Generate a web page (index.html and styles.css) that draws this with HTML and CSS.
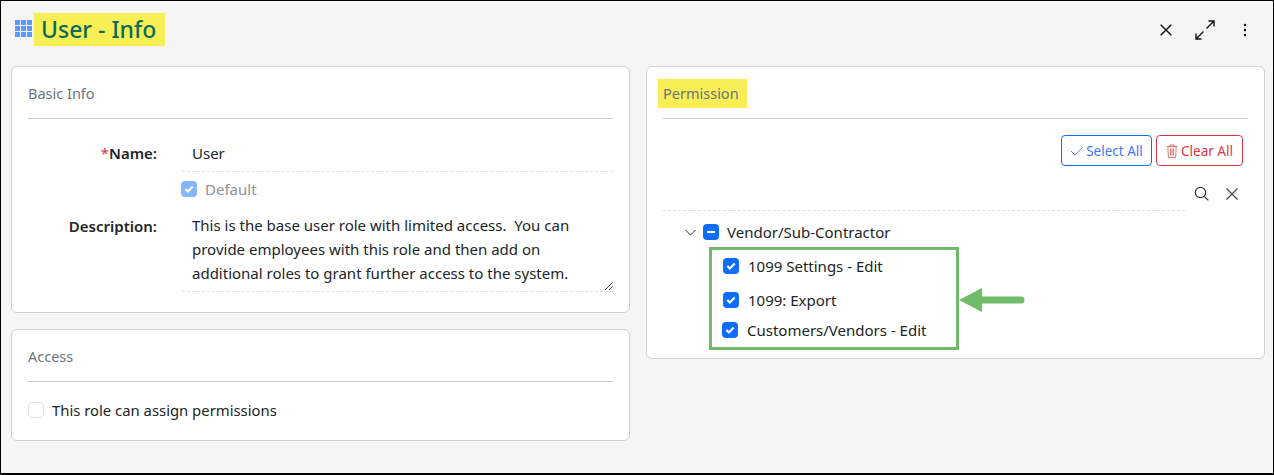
FILE: index.html
```html
<!DOCTYPE html>
<html lang="en">
<head>
<meta charset="utf-8">
<title>User - Info</title>
<link rel="stylesheet" href="styles.css">
</head>
<body>
<div class="frame">
  <header class="topbar">
    <div class="title-wrap">
      <svg class="grid-icon" width="18" height="18" viewBox="0 0 18 18"><g fill="#5b9bff"><rect x="0" y="0" width="5" height="5"/><rect x="6" y="0" width="5" height="5"/><rect x="12" y="0" width="5" height="5"/><rect x="0" y="6" width="5" height="5"/><rect x="6" y="6" width="5" height="5"/><rect x="12" y="6" width="5" height="5"/><rect x="0" y="12" width="5" height="5"/><rect x="6" y="12" width="5" height="5"/><rect x="12" y="12" width="5" height="5"/></g></svg>
      <h1 class="title"><span class="hl">User - Info</span></h1>
    </div>
    <div class="actions">
      <svg width="12" height="12" viewBox="0 0 12 12"><path d="M.7.7l10.600 10.600M11.300.7L.7 11.300" stroke="#111" stroke-width="1.400" fill="none"/></svg>
      <svg class="act-expand" width="20" height="20" viewBox="0 0 20 20"><path d="M11.500 8.500L19 1M13.500 1H19V6.500M8.500 11.500L1 19M1 13.500V19H6.500" stroke="#111" stroke-width="1.400" fill="none"/></svg>
      <svg width="4" height="14" viewBox="0 0 4 14"><circle cx="2" cy="2" r="1.200"/><circle cx="2" cy="7" r="1.200"/><circle cx="2" cy="12" r="1.200"/></svg>
    </div>
  </header>
  <main class="columns">
    <div class="col">
      <section class="card card-basic">
        <h2 class="card-title">Basic Info</h2>
        <div class="row row-name">
          <label class="label"><span class="req">*</span>Name:</label>
          <div class="value input-line">User</div>
        </div>
        <div class="row row-default">
          <span class="label"></span>
          <div class="check-row muted"><span class="cb cb-disabled"><svg width="10" height="8" viewBox="0 0 10 8"><path d="M1.300 4l2.500 2.500L8.700 1.500" stroke="#fff" stroke-width="2" fill="none"/></svg></span>Default</div>
        </div>
        <div class="row row-desc">
          <label class="label">Description:</label>
          <div class="value textarea">This is the base user role with limited access.&nbsp; You can<br>provide employees with this role and then add on<br>additional roles to grant further access to the system.<svg class="grip" width="8" height="8" viewBox="0 0 8 8"><path d="M0 8L8 0M4 8L8 4" stroke="#555" stroke-width="1" fill="none"/></svg></div>
        </div>
      </section>
      <section class="card card-access">
        <h2 class="card-title">Access</h2>
        <div class="check-row"><span class="cb cb-empty"></span>This role can assign permissions</div>
      </section>
    </div>
    <div class="col">
      <section class="card card-perm">
        <h2 class="card-title"><span class="hl hl-small">Permission</span></h2>
        <div class="btn-row">
          <button class="btn btn-blue"><svg width="14" height="10" viewBox="0 0 14 10"><path d="M1 5l4 4 8-8" stroke="#6f8ff5" stroke-width="1" fill="none"/></svg>Select All</button>
          <button class="btn btn-red"><svg width="12" height="14" viewBox="0 0 12 14"><path d="M.5 2.500h11M4 2.500V1h4v1.500M1.800 2.500l.6 11h7.200l.6-11M4.500 4.500v7M6 4.500v7M7.500 4.500v7" stroke="#e8776f" stroke-width="1" fill="none"/></svg>Clear All</button>
        </div>
        <div class="search-row">
          <div class="search-input"></div>
          <svg width="15" height="15" viewBox="0 0 15 15"><circle cx="6.500" cy="6.500" r="5.200" stroke="#333" stroke-width="1.200" fill="none"/><path d="M10.300 10.300L14.300 14.300" stroke="#333" stroke-width="1.200"/></svg>
          <svg width="12" height="12" viewBox="0 0 12 12"><path d="M.5.500l11 11M11.500.500l-11 11" stroke="#345" stroke-width="1.100" fill="none"/></svg>
        </div>
        <div class="tree">
          <div class="tree-parent">
            <svg class="caret" width="11" height="7" viewBox="0 0 11 7"><path d="M.5 1l5 5 5-5" stroke="#333" stroke-width="1" fill="none"/></svg>
            <span class="cb cb-on"><svg width="8" height="2" viewBox="0 0 8 2"><rect width="8" height="2" fill="#fff"/></svg></span>
            <span>Vendor/Sub-Contractor</span>
          </div>
          <div class="callout-wrap">
            <div class="callout">
              <div class="leaf leaf-1"><span class="cb cb-on"><svg width="10" height="8" viewBox="0 0 10 8"><path d="M1.300 4l2.500 2.500L8.700 1.500" stroke="#fff" stroke-width="2" fill="none"/></svg></span>1099 Settings - Edit</div>
              <div class="leaf leaf-2"><span class="cb cb-on"><svg width="10" height="8" viewBox="0 0 10 8"><path d="M1.300 4l2.500 2.500L8.700 1.500" stroke="#fff" stroke-width="2" fill="none"/></svg></span>1099: Export</div>
              <div class="leaf leaf-3"><span class="cb cb-on"><svg width="10" height="8" viewBox="0 0 10 8"><path d="M1.300 4l2.500 2.500L8.700 1.500" stroke="#fff" stroke-width="2" fill="none"/></svg></span>Customers/Vendors - Edit</div>
            </div>
            <svg class="arrow" width="66" height="24" viewBox="0 0 66 24"><path d="M0 12L23 0V8.500H62a3.500 3.500 0 0 1 0 7H23V24z" fill="#6fbb68"/></svg>
          </div>
        </div>
      </section>
    </div>
  </main>
</div>
</body>
</html>
```
FILE: styles.css
```css
* { box-sizing: border-box; }
html, body { margin: 0; height: 100%; }
body { font-family: "Noto Sans", "Open Sans", sans-serif; font-size: 15px; color: #212529; }
.frame { width: 1274px; height: 475px; border: 1px solid #000; border-width: 1px 1px 2px 1px; background: #f5f5f5; overflow: hidden; }
.topbar { height: 65px; display: flex; justify-content: space-between; padding: 12px 26px 0 14px; }
.title-wrap { display: flex; align-items: flex-start; }
.grid-icon { margin-top: 7px; }
.title { margin: 0 0 0 1px; font-size: 23px; font-weight: 500; line-height: 33px; color: #0b6b57; }
.hl { background: #f8ee55; display: inline-block; }
.title .hl { padding: 0 9px 0 7px; }
.actions { display: flex; align-items: center; gap: 23px; height: 33px; }
.act-expand { margin-right: 5px; }
.columns { display: flex; gap: 16px; padding: 0 8px 0 10px; align-items: flex-start; }
.col { width: 619px; display: flex; flex-direction: column; gap: 16px; }
.card { background: #fff; border: 1px solid #d2d2d2; border-radius: 6px; padding: 16px; }
.card-title { margin: 0; font-size: 14.500px; font-weight: 400; color: #6c757d; line-height: 21px; height: 36px; border-bottom: 1px solid #c9c9c9; }
.card-basic { height: 247px; }
.card-access { height: 112px; }
.card-perm { height: 293px; }
.row { display: flex; }
.label { width: 129px; text-align: right; font-weight: 600; flex: none; color: #212529; }
.req { color: #dc3545; font-weight: 400; }
.value { margin-left: 25px; flex: 1; }
.row-name { margin-top: 24px; line-height: 20px; }
.input-line { height: 29px; border-bottom: 1px dashed #e0e0e0; padding-left: 10px; }
.row-default { margin-top: 7px; height: 20px; line-height: 20px; }
.check-row { display: flex; align-items: center; gap: 8px; }
.row-default .check-row { margin-left: 24px; }
.muted { color: #8e9297; }
.cb { width: 16px; height: 16px; border-radius: 4px; display: inline-flex; align-items: center; justify-content: center; flex: none; }
.cb-disabled { background: #86b6fe; }
.cb-on { background: #0d6efd; }
.cb-empty { border: 1px solid #dee2e6; background: #fff; }
.row-desc { margin-top: 17px; line-height: 20px; }
.textarea { position: relative; margin-left: 25px; padding: 0 0 0 10px; line-height: 24px; height: 79px; margin-top: -3px; border-bottom: 1px dashed #e0e0e0; white-space: nowrap; }
.grip { position: absolute; right: 0; bottom: 1px; }
.card-access .check-row { margin-top: 18px; font-size: 14.850px; }
.hl-small { padding: 0 8px 0 5px; margin-left: -5px; line-height: 29px; margin-top: -4px; }
.btn-row { display: flex; justify-content: flex-end; gap: 4px; margin-top: 16px; padding-right: 5px; }
.btn { height: 31px; display: inline-flex; align-items: center; justify-content: center; gap: 2px; background: #fff; border-radius: 4px; font: inherit; font-size: 13.500px; padding: 0; }
.btn-blue { border: 1px solid #0d6efd; color: #3f7cf6; width: 91px; }
.btn-red { border: 1px solid #dc3545; color: #dc3545; width: 87px; gap: 3px; }
.search-row { display: flex; align-items: flex-start; margin-top: 10px; height: 35px; padding-top: 10px; }
.search-input { width: 522px; height: 25px; border-bottom: 1px dashed #e0e0e0; }
.search-row svg:nth-of-type(1) { margin-left: 9px; }
.search-row svg:nth-of-type(2) { margin-left: 17px; margin-top: 2px; }
.tree { padding-top: 10px; }
.tree-parent { display: flex; align-items: center; padding-left: 22px; height: 22px; }
.caret { margin-right: 7px; }
.tree-parent .cb { margin-right: 8px; }
.callout-wrap { display: flex; align-items: center; margin-left: 46px; margin-top: 4px; }
.callout { width: 250px; height: 103px; border: 3px solid #6fbb68; padding-left: 10px; }
.leaf { display: flex; align-items: center; gap: 9px; height: 20px; }
.leaf-1 { margin-top: 6px; padding-left: 1px; }
.leaf-2 { margin-top: 14px; padding-left: 1px; }
.leaf-3 { margin-top: 10px; }
.arrow { margin-left: 0; margin-top: 3px; }
```
